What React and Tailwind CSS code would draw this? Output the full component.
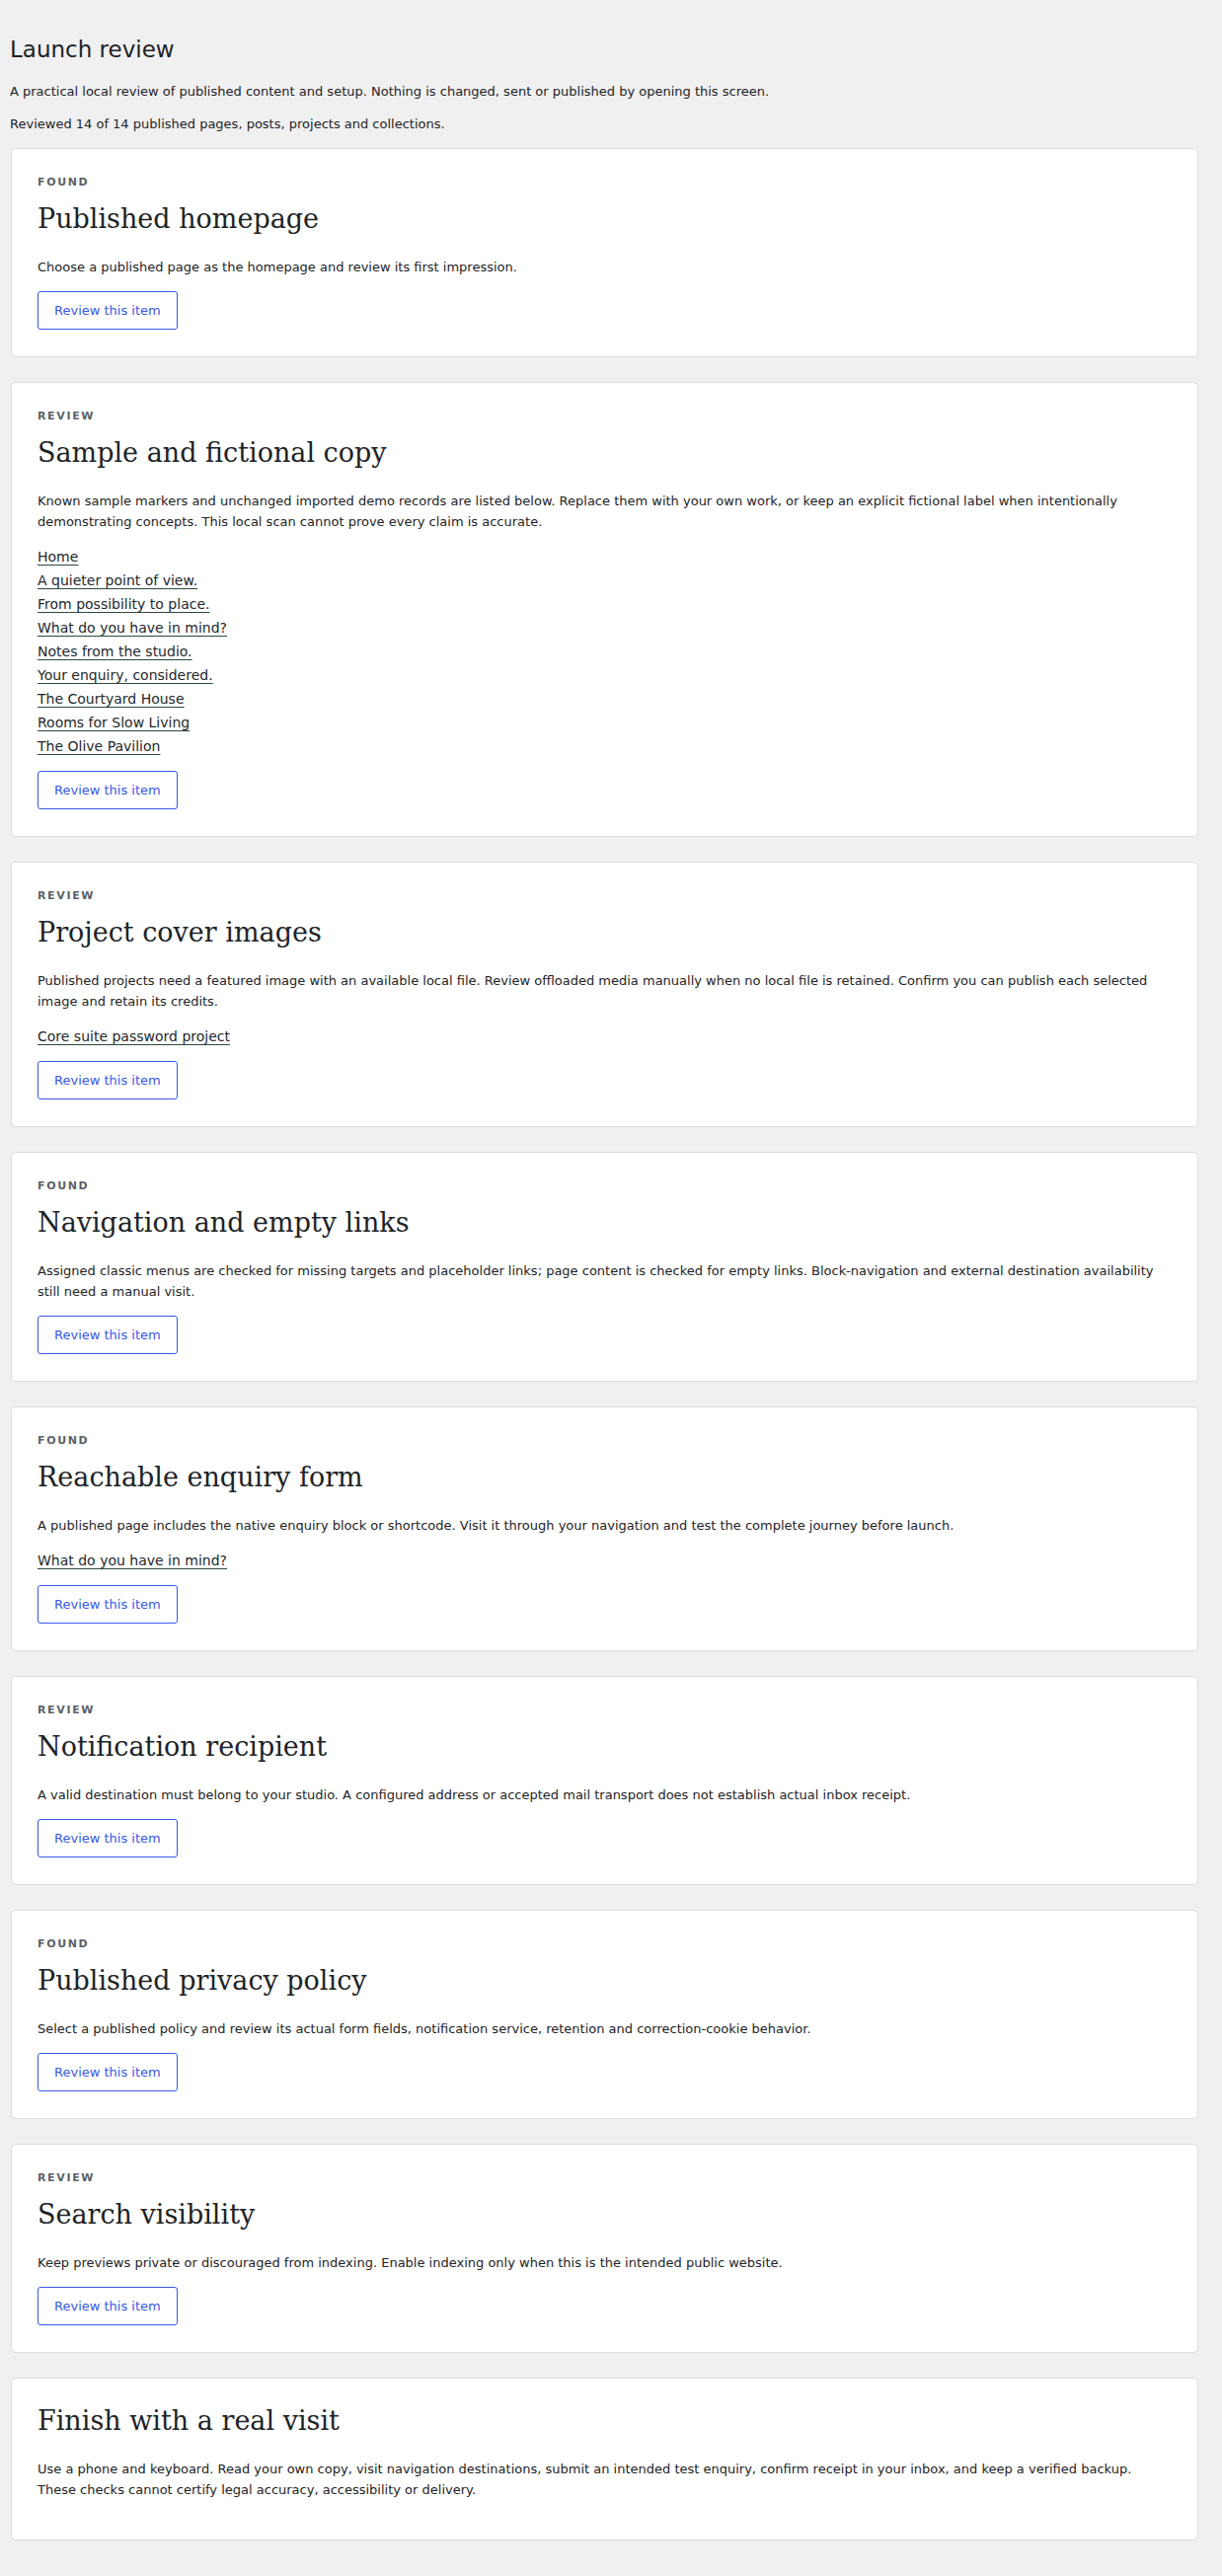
import React from "react";

const cards = [
  {
    eyebrow: "Found",
    title: "Published homepage",
    text: "Choose a published page as the homepage and review its first impression.",
    links: [],
    button: true,
  },
  {
    eyebrow: "Review",
    title: "Sample and fictional copy",
    text: "Known sample markers and unchanged imported demo records are listed below. Replace them with your own work, or keep an explicit fictional label when intentionally demonstrating concepts. This local scan cannot prove every claim is accurate.",
    links: [
      "Home",
      "A quieter point of view.",
      "From possibility to place.",
      "What do you have in mind?",
      "Notes from the studio.",
      "Your enquiry, considered.",
      "The Courtyard House",
      "Rooms for Slow Living",
      "The Olive Pavilion",
    ],
    button: true,
  },
  {
    eyebrow: "Review",
    title: "Project cover images",
    text: "Published projects need a featured image with an available local file. Review offloaded media manually when no local file is retained. Confirm you can publish each selected image and retain its credits.",
    links: ["Core suite password project"],
    button: true,
  },
  {
    eyebrow: "Found",
    title: "Navigation and empty links",
    text: "Assigned classic menus are checked for missing targets and placeholder links; page content is checked for empty links. Block-navigation and external destination availability still need a manual visit.",
    links: [],
    button: true,
  },
  {
    eyebrow: "Found",
    title: "Reachable enquiry form",
    text: "A published page includes the native enquiry block or shortcode. Visit it through your navigation and test the complete journey before launch.",
    links: ["What do you have in mind?"],
    button: true,
  },
  {
    eyebrow: "Review",
    title: "Notification recipient",
    text: "A valid destination must belong to your studio. A configured address or accepted mail transport does not establish actual inbox receipt.",
    links: [],
    button: true,
  },
  {
    eyebrow: "Found",
    title: "Published privacy policy",
    text: "Select a published policy and review its actual form fields, notification service, retention and correction-cookie behavior.",
    links: [],
    button: true,
  },
  {
    eyebrow: "Review",
    title: "Search visibility",
    text: "Keep previews private or discouraged from indexing. Enable indexing only when this is the intended public website.",
    links: [],
    button: true,
  },
  {
    eyebrow: null,
    title: "Finish with a real visit",
    text: "Use a phone and keyboard. Read your own copy, visit navigation destinations, submit an intended test enquiry, confirm receipt in your inbox, and keep a verified backup. These checks cannot certify legal accuracy, accessibility or delivery.",
    links: [],
    button: false,
  },
];

function Card({ card }) {
  const hasLinks = card.links.length > 0;
  return (
    <section className="ml-[1px] rounded-[5px] border border-[#dcdcde] bg-white px-[26px] pt-[26px] pb-[27px]">
      {card.eyebrow && (
        <p className="text-[11px] font-bold uppercase leading-[16px] tracking-[0.15em] text-[#5b6166]">
          {card.eyebrow}
        </p>
      )}
      <h2
        className={`${card.eyebrow ? "mt-3" : ""} text-[27px] font-normal leading-[34px] text-[#1d2327]`}
        style={{ fontFamily: '"DejaVu Serif", "Liberation Serif", serif' }}
      >
        {card.title}
      </h2>
      <p
        className={`mt-[21px] text-[13px] leading-[21px] text-[#1d2327] ${
          card.button ? (hasLinks ? "mb-[13px]" : "mb-[14px]") : "mb-[13px]"
        }`}
      >
        {card.text}
      </p>
      {hasLinks && (
        <ul className="mb-[13px]">
          {card.links.map((l) => (
            <li key={l} className="text-[14px] leading-[24px]">
              <a
                href="#"
                className="text-[#23282d] underline decoration-[#2c4a3a] decoration-1 underline-offset-[3px]"
              >
                {l}
              </a>
            </li>
          ))}
        </ul>
      )}
      {card.button && (
        <button
          type="button"
          className="h-[39px] rounded-[3px] border border-[#3858e9] bg-white px-4 text-[13px] leading-[37px] text-[#3858e9]"
        >
          Review this item
        </button>
      )}
    </section>
  );
}

export default function App() {
  return (
    <div
      className="min-h-[2610px] bg-[#f0f0f1] pl-[10px] pr-[24px] pt-[35px] pb-[36px] text-[#1d2327]"
      style={{ fontFamily: '"DejaVu Sans", "Noto Sans", sans-serif' }}
    >
      <h1 className="text-[23px] font-normal leading-[30px] text-[#1d2327]">Launch review</h1>
      <p className="mt-[18px] text-[13px] leading-[19.5px]">
        A practical local review of published content and setup. Nothing is changed, sent or published by opening this screen.
      </p>
      <p className="mt-[13px] text-[13px] leading-[19.5px]">
        Reviewed 14 of 14 published pages, posts, projects and collections.
      </p>
      <div className="mt-[15px] flex flex-col gap-[25px]">
        {cards.map((c) => (
          <Card key={c.title} card={c} />
        ))}
      </div>
    </div>
  );
}
